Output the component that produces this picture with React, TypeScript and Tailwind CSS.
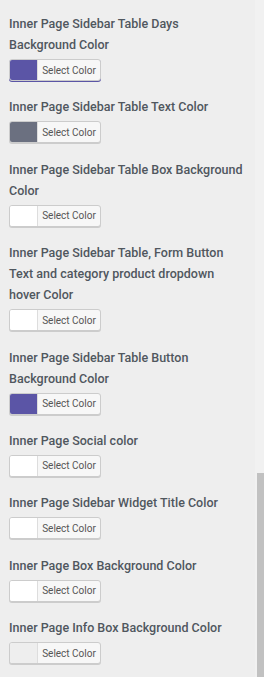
import React from "react";

type Field = {
  label: string;
  color: string;
  accent?: boolean;
};

const fields: Field[] = [
  { label: "Inner Page Sidebar Table Days Background Color", color: "#5b55a6", accent: true },
  { label: "Inner Page Sidebar Table Text Color", color: "#6b7080" },
  { label: "Inner Page Sidebar Table Box Background Color", color: "#ffffff" },
  { label: "Inner Page Sidebar Table, Form Button Text and category product dropdown hover Color", color: "#ffffff" },
  { label: "Inner Page Sidebar Table Button Background Color", color: "#5b55a6" },
  { label: "Inner Page Social color", color: "#ffffff" },
  { label: "Inner Page Sidebar Widget Title Color", color: "#ffffff" },
  { label: "Inner Page Box Background Color", color: "#ffffff" },
  { label: "Inner Page Info Box Background Color", color: "#eeeeee" },
];

function ColorButton({ color, accent }: { color: string; accent?: boolean }) {
  return (
    <button
      className={
        "flex h-[22px] w-[92px] overflow-hidden rounded-[3px] border border-[#cccccc] bg-[#f7f7f7] " +
        (accent ? "shadow-[0_1px_0_#5b55a6]" : "shadow-[0_1px_0_#cccccc]")
      }
    >
      <span className="h-full w-[27px] shrink-0" style={{ backgroundColor: color }} />
      <span className="flex h-full flex-1 items-center justify-center border-l border-[#dddddd] text-[10px] text-[#555555]">
        Select Color
      </span>
    </button>
  );
}

export default function App() {
  return (
    <div className="flex h-[677px] w-[264px] overflow-hidden bg-[#eeeeee] font-['Roboto',sans-serif]">
      {/* SETTINGS LIST */}

      <div className="flex flex-1 flex-col px-[9px] pt-[13px]">
        {fields.map((f) => (
          <div key={f.label} className="mb-[15.4px] flex flex-col">
            <p className="mb-[4px] text-[12.5px] leading-[21px] font-medium text-[#50575e]">
              {f.label}
            </p>
            <ColorButton color={f.color} accent={f.accent} />
          </div>
        ))}
      </div>

      {/* SCROLLBAR */}

      <div className="flex w-[9px] shrink-0 flex-col justify-end bg-[#f1f1f1] pl-[2px]">
        <div className="h-[204px] bg-[#c1c1c1]" />
      </div>
    </div>
  );
}
